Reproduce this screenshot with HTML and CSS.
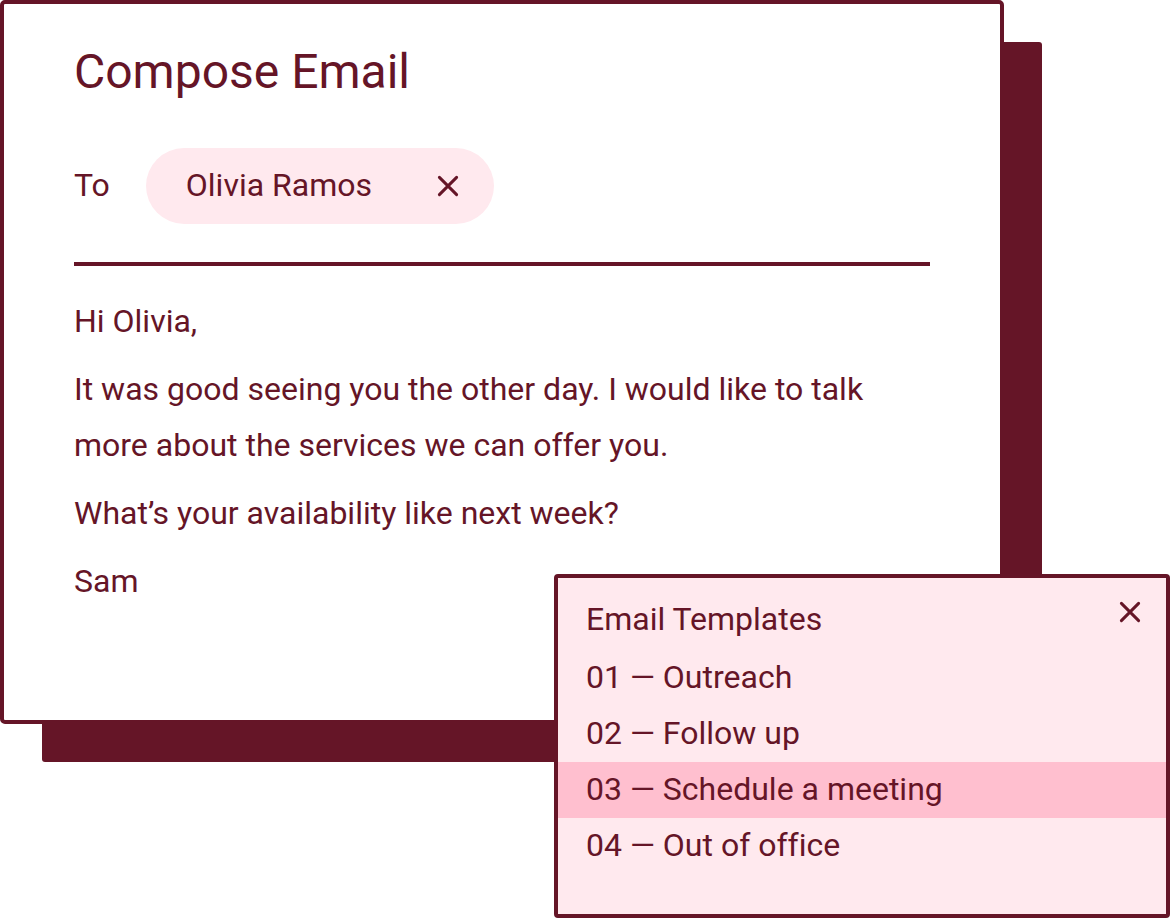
FILE: index.html
```html
<!DOCTYPE html>
<html lang="en">
<head>
<meta charset="utf-8">
<meta name="viewport" content="width=device-width, initial-scale=1">
<title>Compose Email</title>
<link rel="stylesheet" href="styles.css">
</head>
<body>
<div class="stage">
  <main class="composer">
    <h1 class="composer-title">Compose Email</h1>
    <div class="recipients">
      <span class="recipients-label">To</span>
      <span class="chip">Olivia Ramos
        <button class="close" type="button" aria-label="Remove Olivia Ramos">
          <svg class="close-icon" viewBox="0 0 20 20" aria-hidden="true"><path d="M1.4 1.4L18.6 18.6M18.6 1.4L1.4 18.6"/></svg>
        </button>
      </span>
    </div>
    <div class="message">
      <p>Hi Olivia,</p>
      <p>It was good seeing you the other day. I would like to talk more about the services we can offer you.</p>
      <p>What’s your availability like next week?</p>
      <p>Sam</p>
    </div>
  </main>
  <aside class="templates" aria-labelledby="templates-title">
    <header class="templates-head">
      <h2 class="templates-title" id="templates-title">Email Templates</h2>
      <button class="close" type="button" aria-label="Close templates">
        <svg class="close-icon" viewBox="0 0 20 20" aria-hidden="true"><path d="M1.4 1.4L18.6 18.6M18.6 1.4L1.4 18.6"/></svg>
      </button>
    </header>
    <ul class="template-list">
      <li><button class="template" type="button">01 — Outreach</button></li>
      <li><button class="template" type="button">02 — Follow up</button></li>
      <li><button class="template template-active" type="button" aria-current="true">03 — Schedule a meeting</button></li>
      <li><button class="template" type="button">04 — Out of office</button></li>
    </ul>
  </aside>
</div>
</body>
</html>
```
FILE: styles.css
```css
:root {
  --ink: #651527;
  --blush: #ffe9ee;
  --rose: #ffbfcf;
}

* {
  box-sizing: border-box;
}

body {
  margin: 0;
  background: #fff;
  color: var(--ink);
  font: 32px/56px Roboto, sans-serif;
  font-variant-ligatures: none;
}

h1, h2, p, ul {
  margin: 0;
  padding: 0;
  font-weight: 400;
}

button {
  border: 0;
  padding: 0;
  background: none;
  color: inherit;
  font: inherit;
  font-variant-ligatures: none;
  cursor: pointer;
}

.stage {
  position: relative;
  min-height: 918px;
}

.composer {
  margin-right: 166px;
  padding: 40px 70px 111px;
  border: 4px solid var(--ink);
  border-radius: 5px;
  background: #fff;
  box-shadow: 40px 40px 0 -2px var(--ink);
}

.composer-title {
  font-size: 48px;
  line-height: 56px;
}

.recipients {
  display: flex;
  align-items: baseline;
  gap: 36px;
  padding: 48px 0 38px;
  border-bottom: 4px solid var(--ink);
}

.chip {
  display: flex;
  align-items: center;
  gap: 56px;
  padding: 9px 26px 11px 40px;
  border-radius: 38px;
  background: var(--blush);
}

.close {
  display: grid;
  place-items: center;
  width: 40px;
  height: 40px;
  padding-top: 2px;
}

.close-icon {
  width: 20px;
  height: 20px;
  overflow: visible;
  fill: none;
  stroke: currentColor;
  stroke-width: 3;
  stroke-linecap: round;
}

.message {
  display: grid;
  gap: 12px;
  padding-top: 27px;
}

.templates {
  position: absolute;
  right: 0;
  bottom: 0;
  width: 616px;
  padding-bottom: 40px;
  border: 4px solid var(--ink);
  border-radius: 4px;
  background: var(--blush);
}

.templates-head {
  display: flex;
  justify-content: space-between;
  align-items: flex-start;
  padding: 13px 16px 3px 28px;
}

.templates-title {
  font-size: 32px;
  line-height: 56px;
}

.template-list {
  list-style: none;
}

.template {
  display: block;
  width: 100%;
  padding: 0 28px 2px;
  line-height: 54px;
  text-align: left;
}

.template-active {
  background: var(--rose);
}
```
